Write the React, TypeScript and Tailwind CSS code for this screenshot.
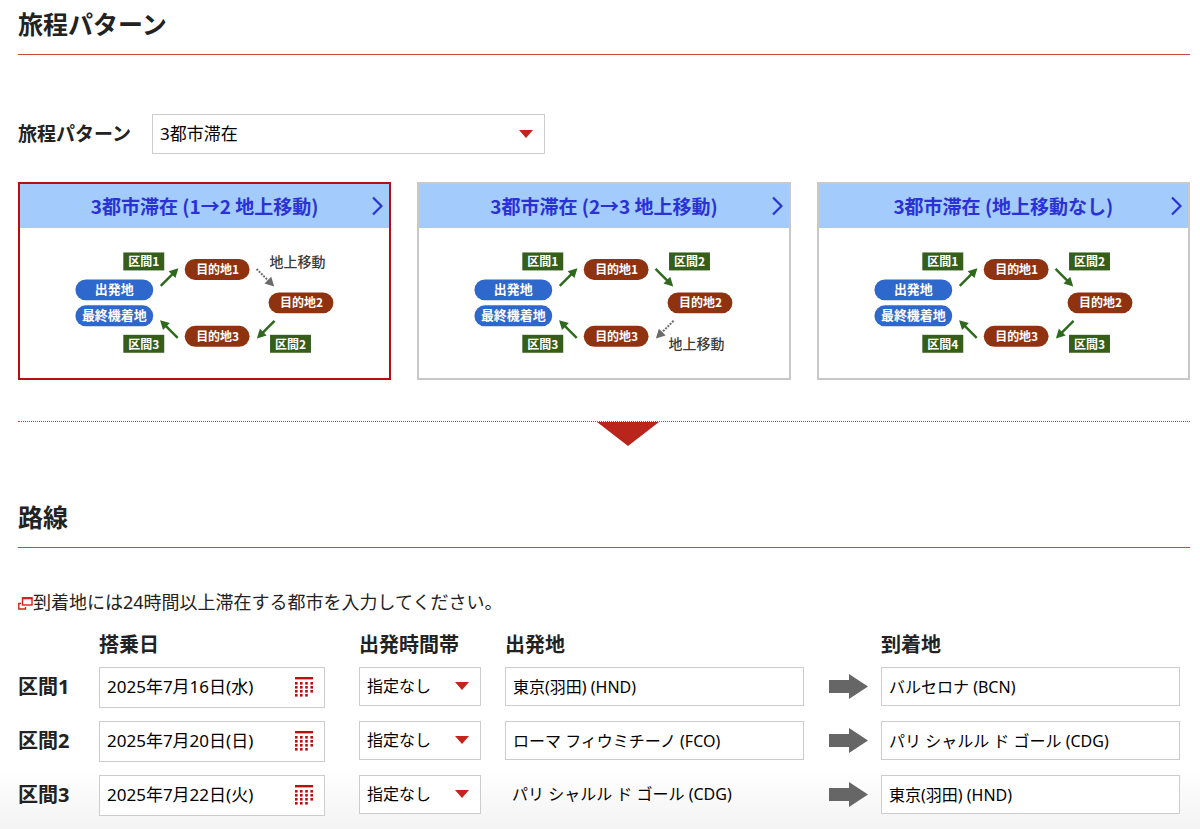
import { useState } from "react";

type Leg = { tag: string; ground?: boolean };

type Pattern = {
  id: string;
  title: string;
  legs: [Leg, Leg, Leg, Leg];
};

const patterns: Pattern[] = [
  {
    id: "ground12",
    title: "3都市滞在 (1→2 地上移動)",
    legs: [{ tag: "区間1" }, { tag: "地上移動", ground: true }, { tag: "区間2" }, { tag: "区間3" }],
  },
  {
    id: "ground23",
    title: "3都市滞在 (2→3 地上移動)",
    legs: [{ tag: "区間1" }, { tag: "区間2" }, { tag: "地上移動", ground: true }, { tag: "区間3" }],
  },
  {
    id: "none",
    title: "3都市滞在 (地上移動なし)",
    legs: [{ tag: "区間1" }, { tag: "区間2" }, { tag: "区間3" }, { tag: "区間4" }],
  },
];

const segments = [
  { name: "区間1", date: "2025年7月16日(水)", from: "東京(羽田) (HND)", to: "バルセロナ (BCN)" },
  { name: "区間2", date: "2025年7月20日(日)", from: "ローマ フィウミチーノ (FCO)", to: "パリ シャルル ド ゴール (CDG)" },
  { name: "区間3", date: "2025年7月22日(火)", from: "パリ シャルル ド ゴール (CDG)", to: "東京(羽田) (HND)", fixedFrom: true },
];

// tag box and arrow of each leg, clockwise from the departure city
const legLayout = [
  { x: 103.5, y: 24.5, ax: 141, ay: 58, angle: -45 },
  { x: 250.5, y: 24.5, ax: 237, ay: 41, angle: 45 },
  { x: 250.5, y: 107, ax: 255, ay: 93, angle: 135 },
  { x: 103.5, y: 107, ax: 158, ay: 110, angle: 225 },
];

const cities = [
  { name: "目的地1", x: 165, y: 31 },
  { name: "目的地2", x: 249, y: 64.5 },
  { name: "目的地3", x: 165, y: 98 },
];

function RouteDiagram({ legs }: { legs: Leg[] }) {
  return (
    <svg viewBox="0 0 370 150" className="block w-full" textAnchor="middle">
      {[
        { name: "出発地", y: 51.5 },
        { name: "最終機着地", y: 77.5 },
      ].map((home) => (
        <g key={home.name}>
          <rect x="55.5" y={home.y} width="78" height="21" rx="10.5" fill="#2f68cd" />
          <text x="94.5" y={home.y + 15} className="text-[13px] font-bold" fill="#fff">
            {home.name}
          </text>
        </g>
      ))}
      {cities.map((city) => (
        <g key={city.name}>
          <rect x={city.x} y={city.y} width="65" height="21" rx="10.5" fill="#8f3210" />
          <text x={city.x + 33} y={city.y + 15} className="text-xs font-bold" fill="#fff">
            {city.name}
          </text>
        </g>
      ))}
      {legs.map((leg, i) => {
        const l = legLayout[i];
        const color = leg.ground ? "#6b6b6b" : "#2d6a1c";
        return (
          <g key={i}>
            {leg.ground ? (
              <text x={l.x + 27.5} y={l.y + 14.5} className="text-sm font-medium" fill="#3a3a3a">
                {leg.tag}
              </text>
            ) : (
              <>
                <rect x={l.x} y={l.y} width="41" height="18" fill="#355e1b" />
                <text x={l.x + 20.5} y={l.y + 14} className="text-xs font-bold" fill="#fff">
                  {leg.tag}
                </text>
              </>
            )}
            <g transform={`translate(${l.ax} ${l.ay}) rotate(${l.angle})`}>
              <path
                d="M0 0H17"
                stroke={color}
                strokeWidth={leg.ground ? 2 : 2.5}
                strokeDasharray={leg.ground ? "2 1.2" : undefined}
              />
              <path d="M16 -4.8L25 0L16 4.8Z" fill={color} />
            </g>
          </g>
        );
      })}
    </svg>
  );
}

function CaretDown() {
  return (
    <svg viewBox="0 0 14 8" className="pointer-events-none absolute w-3.5 h-2 right-3 top-1/2 -translate-y-1/2">
      <path d="M0 0H14L7 8Z" fill="#c4241a" />
    </svg>
  );
}

function CalendarIcon() {
  return (
    <svg viewBox="0 0 18 20" className="w-[18px] h-5" fill="#b5120f">
      <rect width="18" height="2.4" />
      {[5, 9, 13, 17].map((y, row) =>
        [0, 5, 10.2, 15.4].map((x, col) =>
          row === 3 && col === 3 ? null : <rect key={`${x}-${y}`} x={x} y={y} width="2.6" height="2.6" />
        )
      )}
    </svg>
  );
}

function SectionTitle({ children }: { children: string }) {
  return (
    <h2 className="text-[25px] leading-8 font-bold text-[#222] pb-[14px] border-b border-[#cb4640]">
      {children}
    </h2>
  );
}

export default function App() {
  const [selected, setSelected] = useState("ground12");

  return (
    <div className="min-h-screen pl-[18px] pr-2.5 pt-2 text-black bg-[linear-gradient(to_top,#f3f3f3,#fff_60px)] font-['Noto_Sans','Noto_Sans_CJK_JP',sans-serif]">
      <section>
        <SectionTitle>旅程パターン</SectionTitle>

        <div className="flex items-center mt-[59px]">
          <label htmlFor="pattern" className="w-[134px] text-[19px] font-bold text-[#222]">
            旅程パターン
          </label>
          <div className="relative w-[393px]">
            <select
              id="pattern"
              className="w-full h-10 px-[7px] text-[17px] bg-white border border-[#ccc] appearance-none"
            >
              <option>3都市滞在</option>
            </select>
            <CaretDown />
          </div>
        </div>

        <div className="grid grid-cols-3 gap-[26px] mt-7">
          {patterns.map((pattern) => (
            <button
              key={pattern.id}
              type="button"
              onClick={() => setSelected(pattern.id)}
              className={`bg-white border-2 font-['Noto_Sans_CJK_JP',sans-serif] ${
                selected === pattern.id ? "border-[#b80d12]" : "border-[#c8c8c8]"
              }`}
            >
              <div className="relative h-11 flex items-center justify-center bg-[#a3cbfb] text-[19px] font-bold text-[#2a32d6]">
                {pattern.title}
                <svg viewBox="0 0 11 20" className="absolute right-1.5 w-[11px] h-5" fill="none" stroke="currentColor" strokeWidth="2.2">
                  <path d="M1 1.5L9.5 10L1 18.5" />
                </svg>
              </div>
              <RouteDiagram legs={pattern.legs} />
            </button>
          ))}
        </div>
      </section>

      <div className="mt-[41px] border-t border-dotted border-t-[#d2352c]">
        <svg viewBox="0 0 62 24" className="block w-[62px] h-6 ml-[49.4%]">
          <path d="M0 0H62L31 24Z" fill="#b9251a" />
        </svg>
      </div>

      <section className="mt-[55px]">
        <SectionTitle>路線</SectionTitle>

        <p className="flex items-center mt-10 text-lg leading-7 text-[#222]">
          <svg viewBox="0 0 15 13" className="w-[15px] h-[13px] mt-1" fill="none" stroke="#d0221c">
            <rect x="4.5" y="1" width="9.5" height="7" strokeWidth="1.4" />
            <path d="M4 1.2H14.5" strokeWidth="2.2" />
            <path d="M3 6.5H0.8V12H7.5V10" strokeWidth="1.4" />
          </svg>
          到着地には24時間以上滞在する都市を入力してください。
        </p>

        <table className="w-full table-fixed">
          <colgroup>
            <col className="w-[81px]" />
            <col className="w-[260px]" />
            <col className="w-[146px]" />
            <col />
            <col className="w-[77px]" />
            <col />
            <col className="w-2.5" />
          </colgroup>
          <thead>
            <tr className="h-[51px] text-left text-xl text-[#222]">
              <td />
              <th className="pt-2">搭乗日</th>
              <th className="pt-2">出発時間帯</th>
              <th className="pt-2">出発地</th>
              <td />
              <th className="pt-2">到着地</th>
              <td />
            </tr>
          </thead>
          <tbody>
            {segments.map((seg) => (
              <tr key={seg.name} className="h-[54px] align-top">
                <th className="text-left text-xl leading-10 text-[#222]">{seg.name}</th>
                <td>
                  <div className="flex items-center w-[226px] h-[41px] px-[7px] bg-white border border-[#ccc]">
                    <input
                      aria-label={`${seg.name} 搭乗日`}
                      defaultValue={seg.date}
                      className="flex-1 min-w-0 text-[17px] outline-none"
                    />
                    <button type="button" aria-label={`${seg.name} カレンダー`} className="mr-1">
                      <CalendarIcon />
                    </button>
                  </div>
                </td>
                <td>
                  <div className="relative w-[122px]">
                    <select
                      aria-label={`${seg.name} 出発時間帯`}
                      className="w-full h-[39px] px-[7px] text-base bg-white border border-[#ccc] appearance-none"
                    >
                      <option>指定なし</option>
                    </select>
                    <CaretDown />
                  </div>
                </td>
                <td>
                  {seg.fixedFrom ? (
                    <p className="px-[7px] leading-[39px]">{seg.from}</p>
                  ) : (
                    <input
                      aria-label={`${seg.name} 出発地`}
                      defaultValue={seg.from}
                      className="block w-full h-[39px] px-[7px] bg-white border border-[#ccc]"
                    />
                  )}
                </td>
                <td>
                  <svg viewBox="0 0 39 25" className="w-[39px] h-[25px] ml-[25px] mt-[7px]">
                    <path d="M0 6H20V0L39 12.5L20 25V19H0Z" fill="#666" />
                  </svg>
                </td>
                <td>
                  <input
                    aria-label={`${seg.name} 到着地`}
                    defaultValue={seg.to}
                    className="block w-full h-[39px] px-[7px] bg-white border border-[#ccc]"
                  />
                </td>
                <td />
              </tr>
            ))}
          </tbody>
        </table>
      </section>
    </div>
  );
}
